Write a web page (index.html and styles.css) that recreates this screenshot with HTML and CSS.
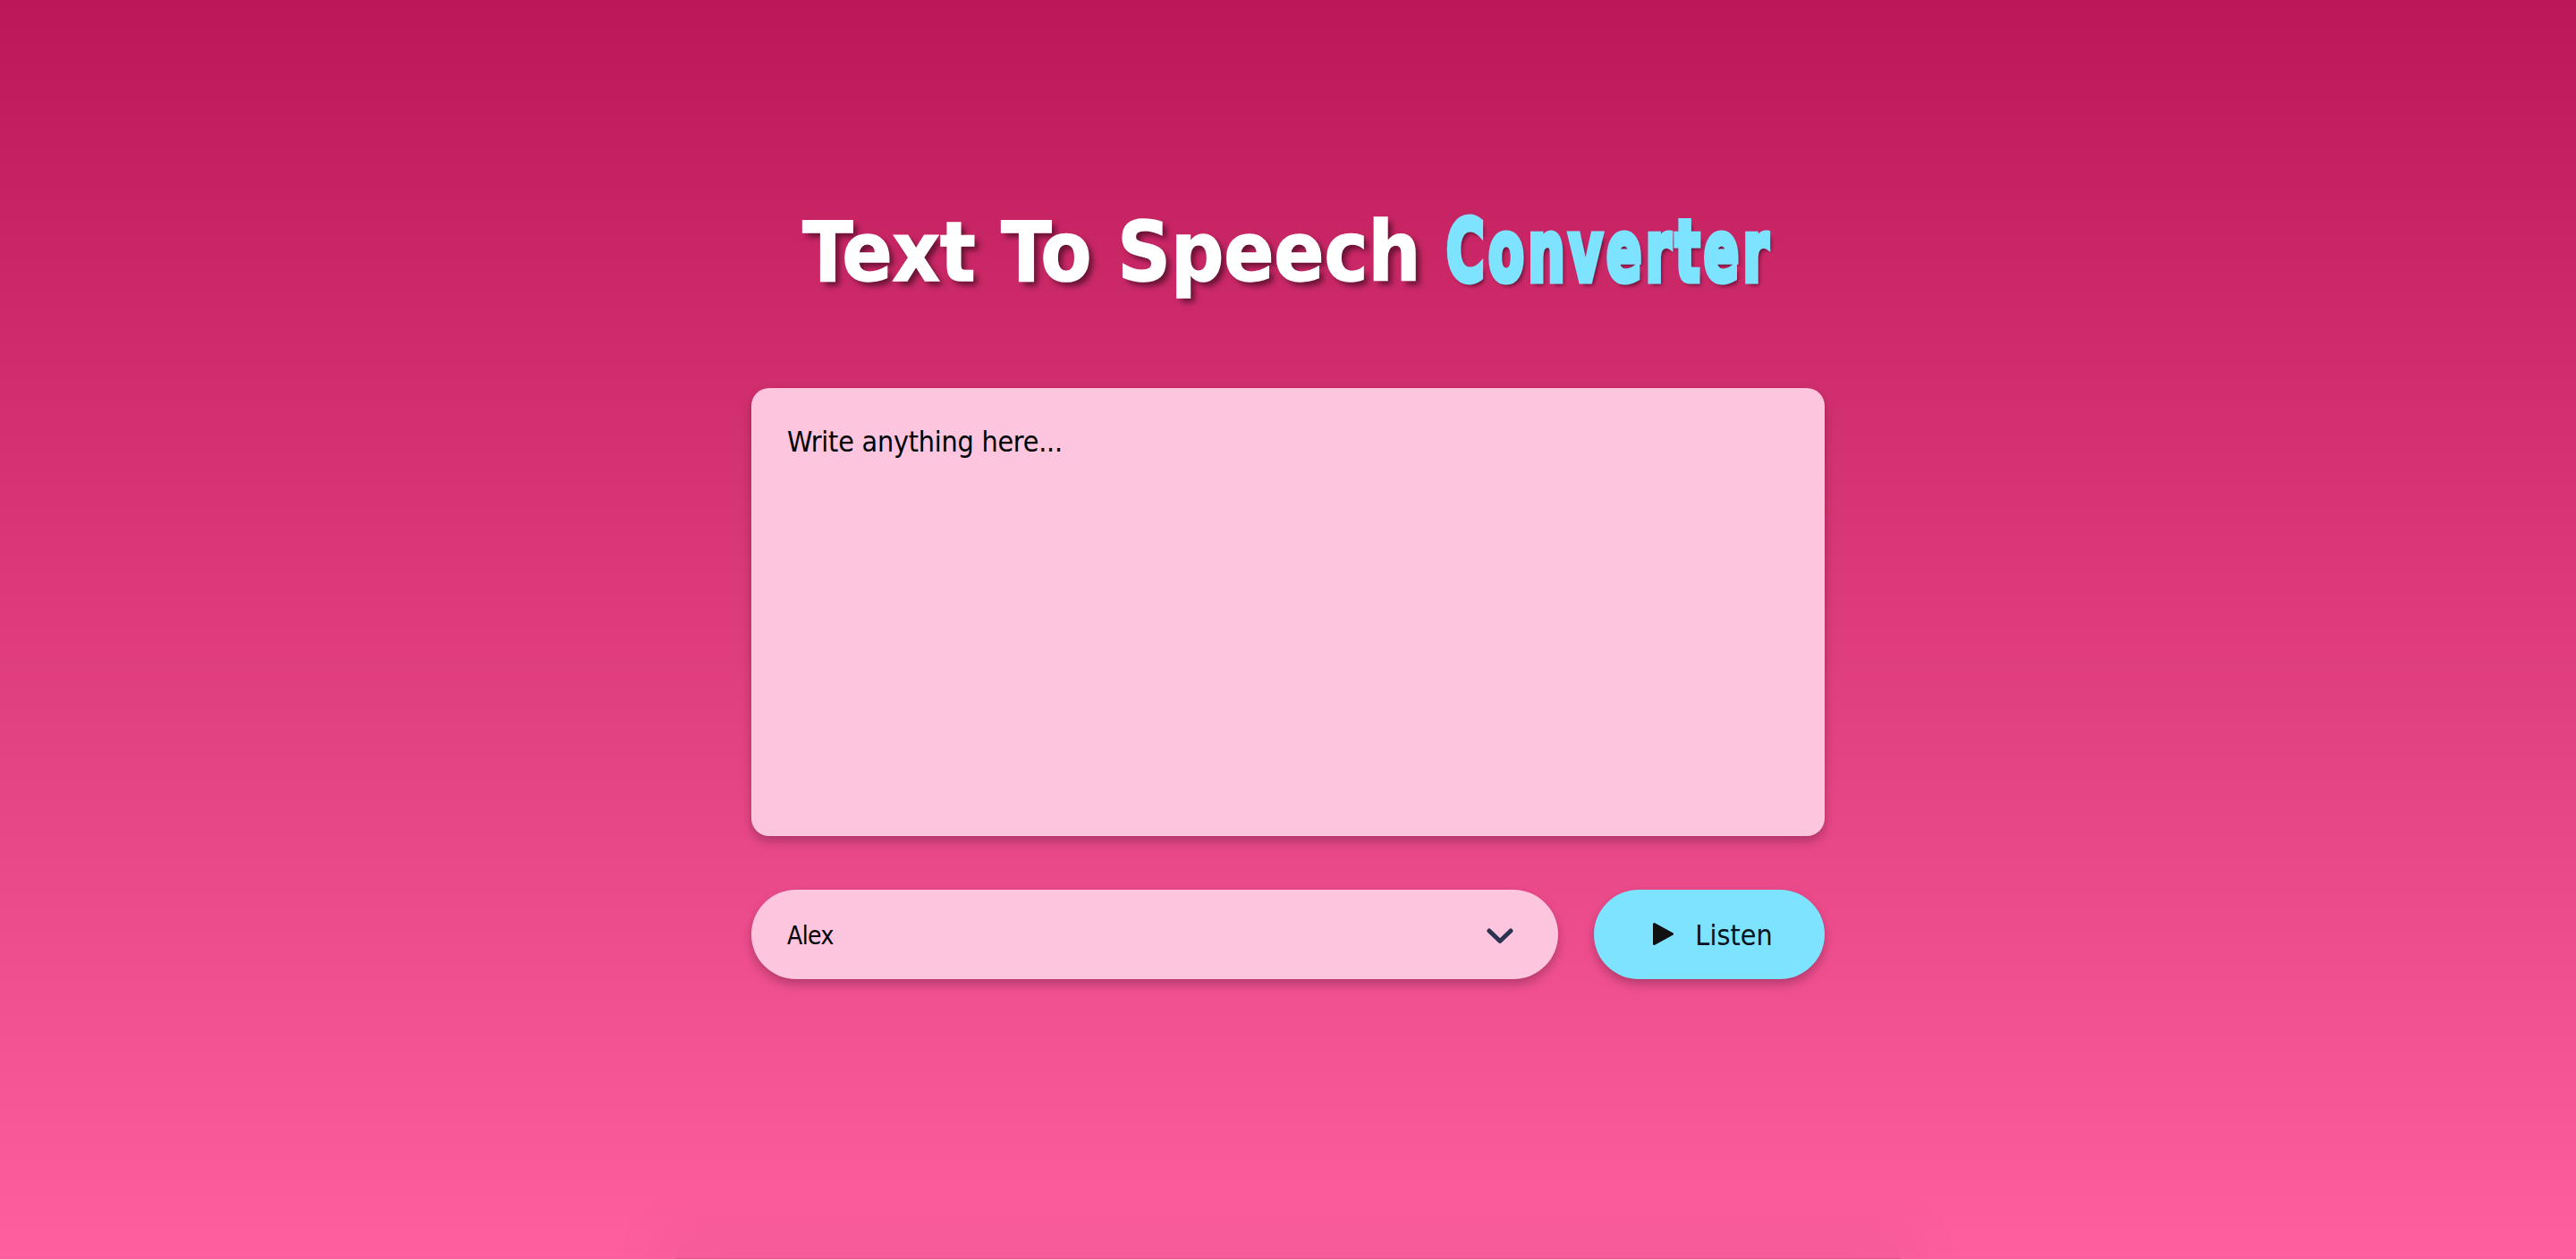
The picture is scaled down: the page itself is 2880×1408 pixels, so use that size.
FILE: index.html
```html
<!DOCTYPE html>
<html lang="en">
<head>
    <meta charset="UTF-8">
    <meta name="viewport" content="width=device-width, initial-scale=1.0">
    <title>Text To Speech Converter</title>
    <link rel="stylesheet" href="styles.css">
</head>
<body>
    <main class="wrapper">
        <h1 class="title">Text To Speech <span class="title-accent">Converter</span></h1>

        <textarea class="text-input" placeholder="Write anything here..."></textarea>

        <div class="controls">
            <div class="voice-picker">
                <select class="voice-select">
                    <option>Alex</option>
                </select>
                <svg class="chevron" viewBox="0 0 30 18" width="30" height="18" aria-hidden="true">
                    <path d="M3 3 L15 14.5 L27 3" fill="none" stroke="#2b3350" stroke-width="5" stroke-linecap="round" stroke-linejoin="round"/>
                </svg>
            </div>
            <button class="listen-btn" type="button">
                <svg class="play-icon" viewBox="0 0 23 25" width="23" height="25" aria-hidden="true">
                    <path d="M1.5 1.5 L21.5 12.5 L1.5 23.5 Z" fill="#111" stroke="#111" stroke-width="3" stroke-linejoin="round"/>
                </svg>
                Listen
            </button>
        </div>
    </main>
    <div class="footer-edge"></div>
</body>
</html>
```
FILE: styles.css
```css
* {
    box-sizing: border-box;
}
html, body {
    height: 100%;
}
body {
    margin: 0;
    overflow: hidden;
    display: flex;
    flex-direction: column;
    align-items: center;
    font-family: "DejaVu Sans Condensed", "DejaVu Sans", sans-serif;
    background: linear-gradient(to bottom, #bc1858, #ff5f9f);
}
.wrapper {
    flex: 1;
    width: 1200px;
    padding-top: 228px;
}
.title {
    margin: 0 0 100px;
    height: 106px;
    line-height: 106px;
    font-size: 92px;
    font-weight: 700;
    white-space: nowrap;
    text-align: center;
    color: #fff;
    -webkit-text-stroke: 1.5px #fff;
    text-shadow: 5px 5px 6px rgba(0, 0, 0, 0.5);
}
.title-accent {
    display: inline-block;
    font-family: "DejaVu Sans", sans-serif;
    font-size: 95px;
    letter-spacing: 7px;
    color: #7de3ff;
    -webkit-text-stroke: 7px #7de3ff;
    transform: scaleX(0.612);
    transform-origin: left center;
    margin-right: -230px;
}
.text-input {
    display: block;
    width: 100%;
    height: 501px;
    padding: 38px 40px;
    border: none;
    border-radius: 20px;
    resize: none;
    outline: none;
    font-family: inherit;
    font-size: 32px;
    line-height: 1.4;
    letter-spacing: -0.25px;
    color: #000;
    background-color: #fdc5de;
    box-shadow: 0 6px 12px rgba(0, 0, 0, 0.25);
}
.text-input::placeholder {
    color: #000;
    opacity: 1;
}
.controls {
    display: flex;
    gap: 40px;
    margin-top: 60px;
}
.voice-picker {
    position: relative;
    flex: 1;
}
.voice-select {
    display: block;
    width: 100%;
    height: 100px;
    padding: 3px 40px 0;
    border: none;
    border-radius: 50px;
    appearance: none;
    font-family: inherit;
    font-size: 28px;
    letter-spacing: -0.6px;
    color: #000;
    background-color: #fdc5de;
    box-shadow: 0 6px 12px rgba(0, 0, 0, 0.25);
}
.chevron {
    position: absolute;
    right: 50px;
    top: 43px;
}
.listen-btn {
    display: flex;
    align-items: center;
    justify-content: center;
    gap: 24px;
    width: 258px;
    height: 100px;
    padding: 2px 0 0 8px;
    border: none;
    border-radius: 50px;
    font-family: inherit;
    font-size: 32px;
    color: #0b1220;
    background-color: #7de3ff;
    box-shadow: 0 6px 12px rgba(0, 0, 0, 0.25);
}
.play-icon {
    margin-top: -4px;
}
.footer-edge {
    flex: none;
    width: 1370px;
    height: 2px;
    background-color: rgba(0, 0, 0, 0.07);
    box-shadow: 0 0 70px 20px rgba(0, 0, 0, 0.07);
}
```
